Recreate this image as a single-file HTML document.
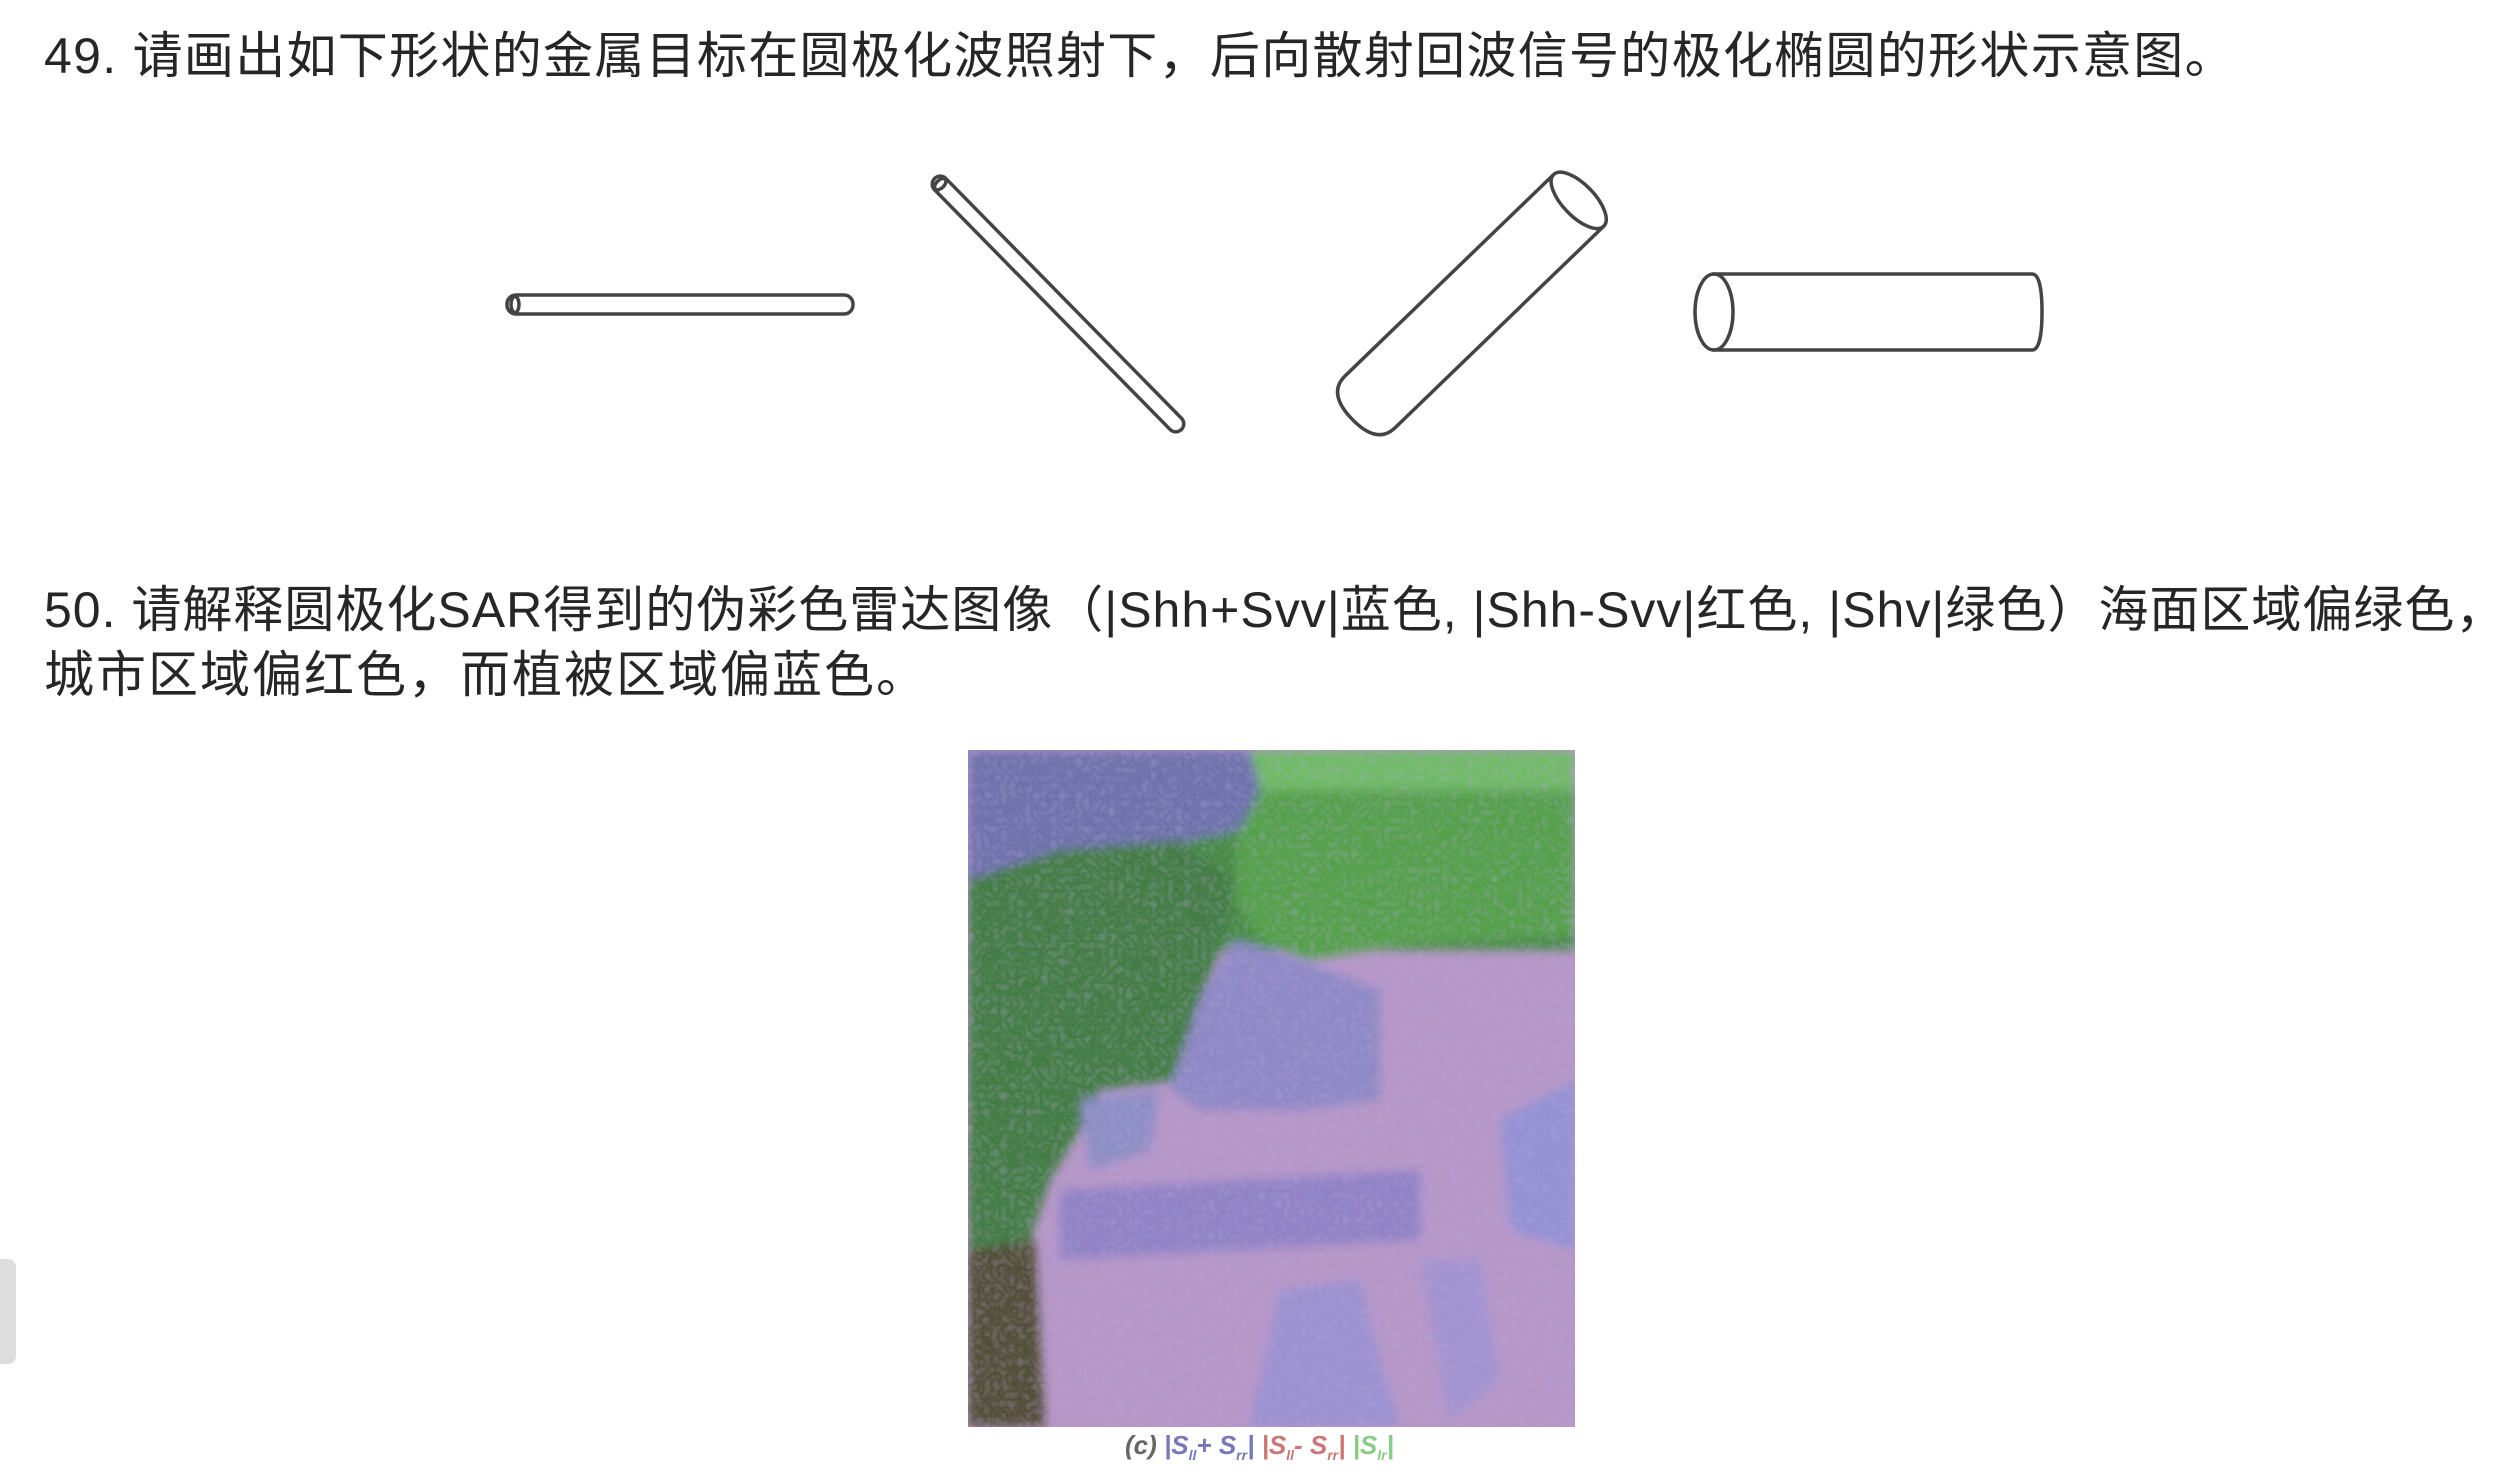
<!DOCTYPE html>
<html><head><meta charset="utf-8"><style>
html,body{margin:0;padding:0;background:#fff;width:2518px;height:1476px;overflow:hidden;position:relative}
.t{position:absolute;white-space:nowrap;font-family:"Liberation Sans","Noto Sans CJK SC",sans-serif;font-size:50px;color:#262626;line-height:60px}
</style></head><body>
<div class="t" style="left:44px;top:26px;letter-spacing:1.3px">49. 请画出如下形状的金属目标在圆极化波照射下，后向散射回波信号的极化椭圆的形状示意图。</div>
<div class="t" style="left:44px;top:580px;letter-spacing:1px">50. 请解释圆极化SAR得到的伪彩色雷达图像（|Shh+Svv|蓝色, |Shh-Svv|红色, |Shv|绿色）海面区域偏绿色，</div>
<div class="t" style="left:44px;top:645px;letter-spacing:2px">城市区域偏红色，而植被区域偏蓝色。</div>

<svg width="2518" height="1476" style="position:absolute;left:0;top:0" xmlns="http://www.w3.org/2000/svg">
<g fill="none" stroke="#444" stroke-width="3.5">
 <rect x="507" y="295" width="346" height="19" rx="9"/>
 <ellipse cx="515" cy="304.5" rx="4" ry="8"/>
 <g transform="translate(1058,304) rotate(45.5)">
  <rect x="-176" y="-8" width="352" height="16" rx="8"/>
  <ellipse cx="-168" cy="0" rx="4" ry="7"/>
 </g>
 <g transform="translate(1460,315) rotate(-44)">
  <path d="M165,-36 L-125,-36 Q-150,-36 -150,0 Q-150,36 -125,36 L165,36"/>
  <ellipse cx="165" cy="0" rx="16" ry="36"/>
 </g>
 <path d="M1712,274 L2032,274 Q2042,274 2042,312 Q2042,350 2032,350 L1712,350"/>
 <ellipse cx="1714" cy="312" rx="19" ry="38"/>
</g>
<defs>
 <filter id="b"><feGaussianBlur stdDeviation="5"/></filter>
 <filter id="n"><feTurbulence baseFrequency="0.12" numOctaves="3" seed="3"/><feColorMatrix values="0 0 0 0 0.45  0 0 0 0 0.4  0 0 0 0 0.7  0 0 0 0.45 0"/><feComposite in2="SourceGraphic" operator="in"/></filter>
 <clipPath id="c"><rect x="968" y="750" width="607" height="677"/></clipPath>
</defs>
<g clip-path="url(#c)">
 <rect x="968" y="750" width="607" height="677" fill="#b795c6"/>
 <g filter="url(#b)">
  <rect x="968" y="750" width="607" height="200" fill="#3f8a3a"/>
  <path d="M1240,750 L1575,750 L1575,935 L1400,945 L1310,960 L1260,940 L1235,900 Z" fill="#4fa043"/>
  <path d="M1230,750 L1575,750 L1575,790 L1240,790 Z" fill="#6cbc5e"/>
  <path d="M968,750 L1250,750 L1260,790 L1240,830 L1170,845 L1110,850 L1070,870 L1020,880 L968,900 Z" fill="#6a6ea8"/>
  <path d="M968,880 L1060,850 L1180,840 L1235,880 L1225,940 L1200,1000 L1180,1080 L1100,1090 L1080,1130 L1050,1180 L1030,1240 L1040,1427 L968,1427 Z" fill="#3c7a3a"/>
  <path d="M968,1250 L1035,1240 L1045,1427 L968,1427 Z" fill="#4e4a2e"/>
  <path d="M1235,940 L1300,960 L1380,990 L1380,1100 L1300,1110 L1200,1110 L1170,1090 L1200,1000 Z" fill="#8c86c4"/>
  <path d="M1080,1100 L1160,1090 L1150,1150 L1090,1170 Z" fill="#8a8cc4"/>
  <path d="M1060,1190 L1420,1170 L1420,1240 L1060,1260 Z" fill="#8e80c4"/>
  <path d="M1500,1120 L1575,1080 L1575,1250 L1510,1230 Z" fill="#9290d4"/>
  <path d="M1280,1290 L1360,1280 L1380,1360 L1400,1427 L1250,1427 Z" fill="#9a8fd0"/>
  <path d="M1420,1260 L1480,1260 L1500,1380 L1450,1420 Z" fill="#a091d0"/>
 </g>
 <rect x="968" y="750" width="607" height="677" fill="#fff" filter="url(#n)"/>
</g>
</svg>
<div class="t" style="left:1125px;top:1430px;font-size:26px;line-height:30px;font-style:italic;font-weight:bold;color:#666">(c) <span style="color:#7777bb">|S<sub style="font-size:14px">ll</sub>+ S<sub style="font-size:14px">rr</sub>|</span> <span style="color:#cc7777">|S<sub style="font-size:14px">ll</sub>- S<sub style="font-size:14px">rr</sub>|</span> <span style="color:#88cc88">|S<sub style="font-size:14px">lr</sub>|</span></div>
<div style="position:absolute;left:0;top:1259px;width:16px;height:105px;background:#ddd;border-radius:0 8px 8px 0"></div>
</body></html>
